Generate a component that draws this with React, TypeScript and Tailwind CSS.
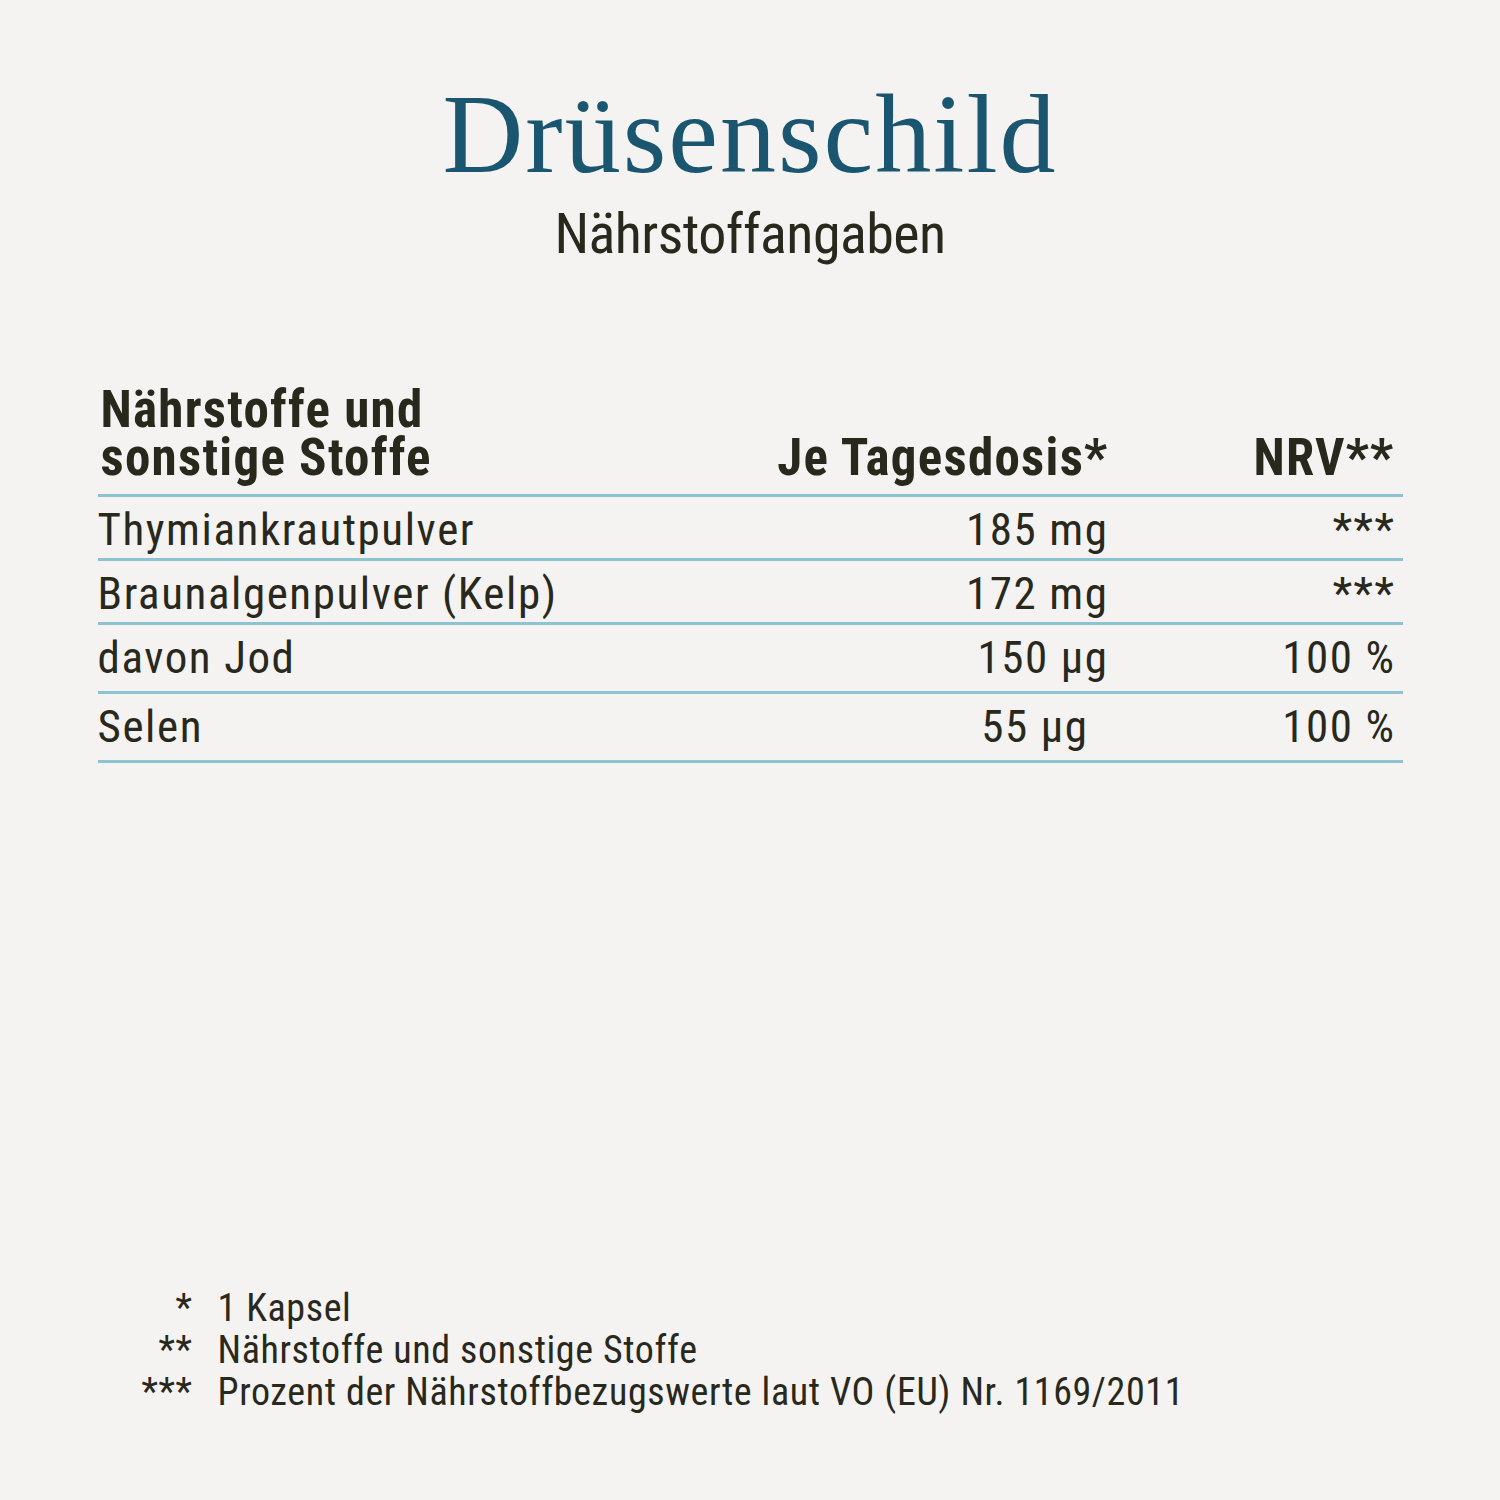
const rows = [
  { name: "Thymiankrautpulver", amount: "185 mg", nrv: "***", h: "h-[64px]", pad: "pr-0" },
  { name: "Braunalgenpulver (Kelp)", amount: "172 mg", nrv: "***", h: "h-[64px]", pad: "pr-0" },
  { name: "davon Jod", amount: "150 µg", nrv: "100 %", h: "h-[69px]", pad: "pr-0" },
  { name: "Selen", amount: "55 µg", nrv: "100 %", h: "h-[69px]", pad: "pr-[20px]" },
];

const notes = [
  { mark: "*", text: "1 Kapsel" },
  { mark: "**", text: "Nährstoffe und sonstige Stoffe" },
  { mark: "***", text: "Prozent der Nährstoffbezugswerte laut VO (EU) Nr. 1169/2011" },
];

export default function App() {
  return (
    <div className="flex h-[1500px] w-[1500px] flex-col items-center bg-[#f4f3f1] font-['Roboto_Condensed',sans-serif] text-[#28281c]">
      <h1 className="mt-[78px] font-['Liberation_Serif',serif] text-[112px] leading-[112px] tracking-[2px] text-[#1b5670]">
        Drüsenschild
      </h1>
      <p className="mt-[16px] text-[56px] leading-[56px] tracking-[-0.01em]">Nährstoffangaben</p>

      <div className="mt-[124px] w-[1305px]">
        <div className="flex items-end border-b-[3px] border-[#8ec3d2] pb-[12px] text-[51px] font-bold leading-[48px] tracking-[0.025em]">
          <div className="flex-1 pl-[3px]">
            Nährstoffe und
            <br />
            sonstige Stoffe
          </div>
          <div className="w-[400px] text-right">Je Tagesdosis*</div>
          <div className="w-[294px] pr-[8px] text-right">NRV**</div>
        </div>

        {rows.map((row) => (
          <div
            key={row.name}
            className={`flex ${row.h} border-b-[3px] border-[#8ec3d2] pt-[10px] text-[45px] leading-[45px] tracking-[0.035em]`}
          >
            <div className="flex-1">{row.name}</div>
            <div className={`w-[400px] text-right ${row.pad}`}>{row.amount}</div>
            <div className="w-[294px] pr-[7px] text-right">{row.nrv}</div>
          </div>
        ))}
      </div>

      <div className="mt-auto mb-[87px] flex w-[1305px] flex-col text-[38px] leading-[42px] tracking-[0.016em]">
        {notes.map((n) => (
          <div key={n.mark} className="flex">
            <span className="w-[95px] text-right">{n.mark}</span>
            <span className="ml-[25px]">{n.text}</span>
          </div>
        ))}
      </div>
    </div>
  );
}
